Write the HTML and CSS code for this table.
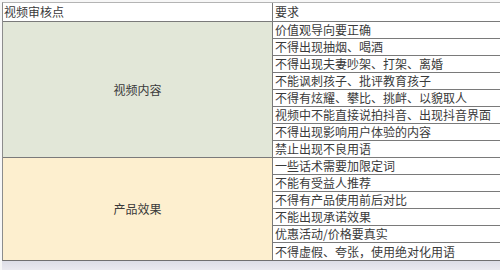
FILE: index.html
```html
<!DOCTYPE html>
<html lang="zh-CN">
<head>
<meta charset="utf-8">
<link rel="stylesheet" href="styles.css">
</head>
<body>
<div class="page">
  <div class="sheet">
    <div class="cell head left">视频审核点</div>
    <div class="cell head right">要求</div>
    <div class="cell group green span8">视频内容</div>
    <div class="cell right">价值观导向要正确</div>
    <div class="cell right">不得出现抽烟、喝酒</div>
    <div class="cell right">不得出现夫妻吵架、打架、离婚</div>
    <div class="cell right">不能讽刺孩子、批评教育孩子</div>
    <div class="cell right">不得有炫耀、攀比、挑衅、以貌取人</div>
    <div class="cell right">视频中不能直接说拍抖音、出现抖音界面</div>
    <div class="cell right">不得出现影响用户体验的内容</div>
    <div class="cell right">禁止出现不良用语</div>
    <div class="cell group yellow span6">产品效果</div>
    <div class="cell right">一些话术需要加限定词</div>
    <div class="cell right">不能有受益人推荐</div>
    <div class="cell right">不得有产品使用前后对比</div>
    <div class="cell right">不能出现承诺效果</div>
    <div class="cell right">优惠活动/价格要真实</div>
    <div class="cell right last">不得虚假、夸张，使用绝对化用语</div>
  </div>
  <div class="foot"></div>
</div>
</body>
</html>
```
FILE: styles.css
```css
html, body {
  margin: 0;
  padding: 0;
  background: #f7f7f7;
}
.page {
  width: 500px;
  height: 270px;
  overflow: hidden;
  padding: 2px 0 0 2px;
  box-sizing: border-box;
  font-family: "Noto Sans CJK SC", "Noto Sans", sans-serif;
  font-size: 12px;
  color: #3a3a3a;
}
.sheet {
  display: grid;
  grid-template-columns: 270px 1fr;
  grid-template-rows: 19px repeat(14, 17px);
  border-top: 1px solid #b4b4b4;
  border-left: 1px solid #8c8c8c;
  border-bottom: 1px solid #707070;
  background: #fff;
}
.cell {
  box-sizing: border-box;
  border-bottom: 1px solid #7a7a7a;
  display: flex;
  align-items: center;
  line-height: 16px;
  white-space: nowrap;
}
.left, .group {
  border-right: 1px solid #7a7a7a;
}
.head {
  background: #fff;
  padding-left: 1px;
}
.right {
  background: #fff;
  padding-left: 2px;
}
.last {
  border-bottom: none;
}
.group {
  justify-content: center;
  grid-column: 1;
}
.span8 { grid-row: span 8; }
.span6 { grid-row: span 6; border-bottom: none; }
.green { background: #e2e7d8; }
.yellow { background: #fdefcf; }
.foot {
  height: 12px;
  background: linear-gradient(#dcdde6, #eeeef3);
}
```
